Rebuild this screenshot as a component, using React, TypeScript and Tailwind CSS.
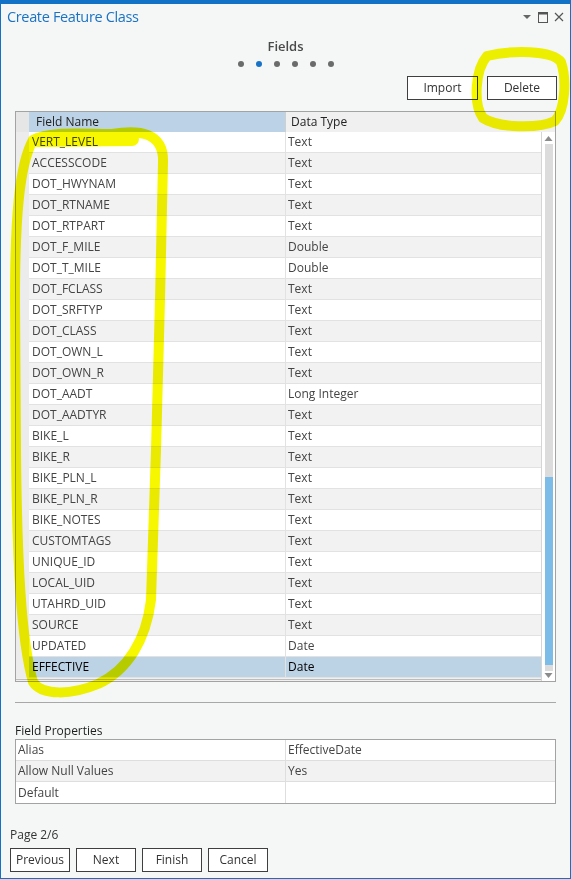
import React from "react";

interface Field {
  name: string;
  type: string;
}

const fields: Field[] = [
  { name: "VERT_LEVEL", type: "Text" },
  { name: "ACCESSCODE", type: "Text" },
  { name: "DOT_HWYNAM", type: "Text" },
  { name: "DOT_RTNAME", type: "Text" },
  { name: "DOT_RTPART", type: "Text" },
  { name: "DOT_F_MILE", type: "Double" },
  { name: "DOT_T_MILE", type: "Double" },
  { name: "DOT_FCLASS", type: "Text" },
  { name: "DOT_SRFTYP", type: "Text" },
  { name: "DOT_CLASS", type: "Text" },
  { name: "DOT_OWN_L", type: "Text" },
  { name: "DOT_OWN_R", type: "Text" },
  { name: "DOT_AADT", type: "Long Integer" },
  { name: "DOT_AADTYR", type: "Text" },
  { name: "BIKE_L", type: "Text" },
  { name: "BIKE_R", type: "Text" },
  { name: "BIKE_PLN_L", type: "Text" },
  { name: "BIKE_PLN_R", type: "Text" },
  { name: "BIKE_NOTES", type: "Text" },
  { name: "CUSTOMTAGS", type: "Text" },
  { name: "UNIQUE_ID", type: "Text" },
  { name: "LOCAL_UID", type: "Text" },
  { name: "UTAHRD_UID", type: "Text" },
  { name: "SOURCE", type: "Text" },
  { name: "UPDATED", type: "Date" },
  { name: "EFFECTIVE", type: "Date" },
];

const properties = [
  { label: "Alias", value: "EffectiveDate" },
  { label: "Allow Null Values", value: "Yes" },
  { label: "Default", value: "" },
];

function PaneButton({ label, width }: { label: string; width: string }) {
  return (
    <button
      className={`${width} h-[24px] bg-white border border-[#3f3f3f] text-[12px] text-[#333] flex items-center justify-center`}
    >
      {label}
    </button>
  );
}

export default function App() {
  const selected = fields.length - 1;

  return (
    <div
      className="relative w-[571px] h-[879px] bg-[#f5f7f7] border-x border-b border-t-[4px] border-[#1273c6] flex flex-col overflow-hidden"
      style={{ fontFamily: '"Open Sans", "Noto Sans", sans-serif' }}
    >
      {/* Pane title bar */}
      <div className="h-[26px] flex items-center justify-between pl-[6px] pr-[6px]">
        <span className="text-[14.5px] text-[#1b72c2] leading-none tracking-[-0.35px]">Create Feature Class</span>
        <div className="flex items-center gap-[6px] text-[#555]">
          <svg width="10" height="10" viewBox="0 0 10 10">
            <path d="M1 3 L9 3 L5 7 Z" fill="#666" />
          </svg>
          <svg width="10" height="11" viewBox="0 0 10 11">
            <rect x="0.5" y="0.5" width="9" height="10" fill="none" stroke="#555" />
            <rect x="0.5" y="0.5" width="9" height="2" fill="#555" />
          </svg>
          <svg width="10" height="10" viewBox="0 0 10 10">
            <path d="M1 1 L9 9 M9 1 L1 9" stroke="#555" strokeWidth="1.2" />
          </svg>
        </div>
      </div>

      {/* Step indicator */}
      <div className="flex flex-col items-center mt-[10px]">
        <span className="text-[13px] font-semibold text-[#4a4a4a] leading-none">Fields</span>
        <div className="flex gap-[12px] mt-[8px]">
          {[0, 1, 2, 3, 4, 5].map((i) => (
            <span
              key={i}
              className={`w-[6px] h-[6px] rounded-full ${i === 1 ? "bg-[#1873c7]" : "bg-[#6b6b6b]"}`}
            />
          ))}
        </div>
      </div>

      {/* Import / Delete */}
      <div className="flex justify-end gap-[9px] pr-[13px] mt-[9px]">
        <PaneButton label="Import" width="w-[71px]" />
        <PaneButton label="Delete" width="w-[70px]" />
      </div>

      {/* Fields grid */}
      <div className="mx-[14px] mt-[11px] border border-[#a3a3a3] bg-[#f0f0f0] h-[571px] flex">
        <div className="flex-1 flex flex-col">
          <div className="flex h-[20px] text-[12px]">
            <div className="w-[13px] bg-[#e6e6e6]" />
            <div className="w-[256px] bg-[#bcd3e7] pl-[7px] flex items-center text-[#222]">Field Name</div>
            <div className="flex-1 bg-[#f0f0f0] border-l border-[#cfcfcf] pl-[5px] flex items-center text-[#222]">
              Data Type
            </div>
          </div>
          {fields.map((f, i) => {
            const isSel = i === selected;
            const rowBg = isSel ? "bg-[#bcd3e6]" : i % 2 === 0 ? "bg-white" : "bg-[#f2f2f2]";
            const txt = isSel ? "text-black" : "text-[#444]";
            return (
              <div key={f.name} className="flex h-[21px] text-[12px]">
                <div className="w-[13px] bg-[#ececec]" />
                <div className={`w-[256px] ${rowBg} ${txt} border-b border-[#e2e2e2] pl-[3px] flex items-center`}>
                  {f.name}
                </div>
                <div className={`flex-1 ${rowBg} ${txt} border-b border-l border-[#e2e2e2] pl-[2px] flex items-center`}>
                  {f.type}
                </div>
              </div>
            );
          })}
          <div className="border-t border-[#bdbdbd] mt-[1px]" />
        </div>

        {/* Vertical scrollbar */}
        <div className="w-[14px] flex flex-col">
          <div className="h-[20px] bg-[#f0f0f0]" />
          <div className="flex-1 bg-white border-l border-[#d5d5d5] flex flex-col items-center py-[2px]">
            <svg width="9" height="7" viewBox="0 0 9 7" className="mt-[1px]">
              <path d="M0.5 6 L4.5 1 L8.5 6 Z" fill="#8c8c8c" />
            </svg>
            <div className="w-[8px] flex-1 bg-[#dcdcdc] flex flex-col justify-end mt-[2px] pb-[6px]">
              <div className="h-[188px] bg-[#7bbde8]" />
            </div>
            <svg width="9" height="7" viewBox="0 0 9 7" className="mt-[1px]">
              <path d="M0.5 1 L8.5 1 L4.5 6 Z" fill="#8c8c8c" />
            </svg>
          </div>
        </div>
      </div>

      <div className="mx-[14px] mt-[20px] border-t border-[#a8a8a8]" />

      {/* Field properties */}
      <div className="mx-[14px] mt-[20px]">
        <div className="text-[12px] text-[#1e1e1e] leading-[16px]">Field Properties</div>
        <div className="border border-[#a3a3a3] bg-white">
          {properties.map((p, i) => (
            <div
              key={p.label}
              className={`flex h-[21px] text-[12px] text-[#444] ${i % 2 === 1 ? "bg-[#f2f2f2]" : "bg-white"} ${
                i < properties.length - 1 ? "border-b border-[#dedede]" : ""
              }`}
            >
              <div className="w-[270px] pl-[2px] flex items-center border-r border-[#dedede]">{p.label}</div>
              <div className="flex-1 pl-[2px] flex items-center">{p.value}</div>
            </div>
          ))}
        </div>
      </div>

      {/* Wizard footer */}
      <div className="mt-auto mb-[6px] px-[9px]">
        <div className="text-[12px] text-[#333] leading-[16px] mb-[5px]">Page 2/6</div>
        <div className="flex gap-[6px]">
          <PaneButton label="Previous" width="w-[60px]" />
          <PaneButton label="Next" width="w-[60px]" />
          <PaneButton label="Finish" width="w-[60px]" />
          <PaneButton label="Cancel" width="w-[60px]" />
        </div>
      </div>

      {/* Highlighter marks drawn over the pane */}
      <svg
        className="absolute left-[-1px] top-[-4px] pointer-events-none mix-blend-multiply"
        width="571"
        height="879"
        viewBox="0 0 571 879"
      >
        <g fill="none" stroke="#f7f700" strokeLinecap="round" strokeLinejoin="round">
          <path
            strokeWidth="10"
            d="M112 134 C140 129 164 133 163 162 L160 300 L156 450 L151 600 C146 640 128 670 98 684 C72 695 42 696 33 682 C21 640 17 560 16 450 L15 300 C15 220 19 165 33 140 C50 131 80 134 112 134"
          />
          <path strokeWidth="14" d="M38 140 L132 139" />
          <path
            strokeWidth="10"
            d="M487 56 C512 50 552 50 561 62 C567 80 565 110 555 121 C538 129 498 128 483 118 C473 104 475 70 487 56"
          />
        </g>
      </svg>
    </div>
  );
}
